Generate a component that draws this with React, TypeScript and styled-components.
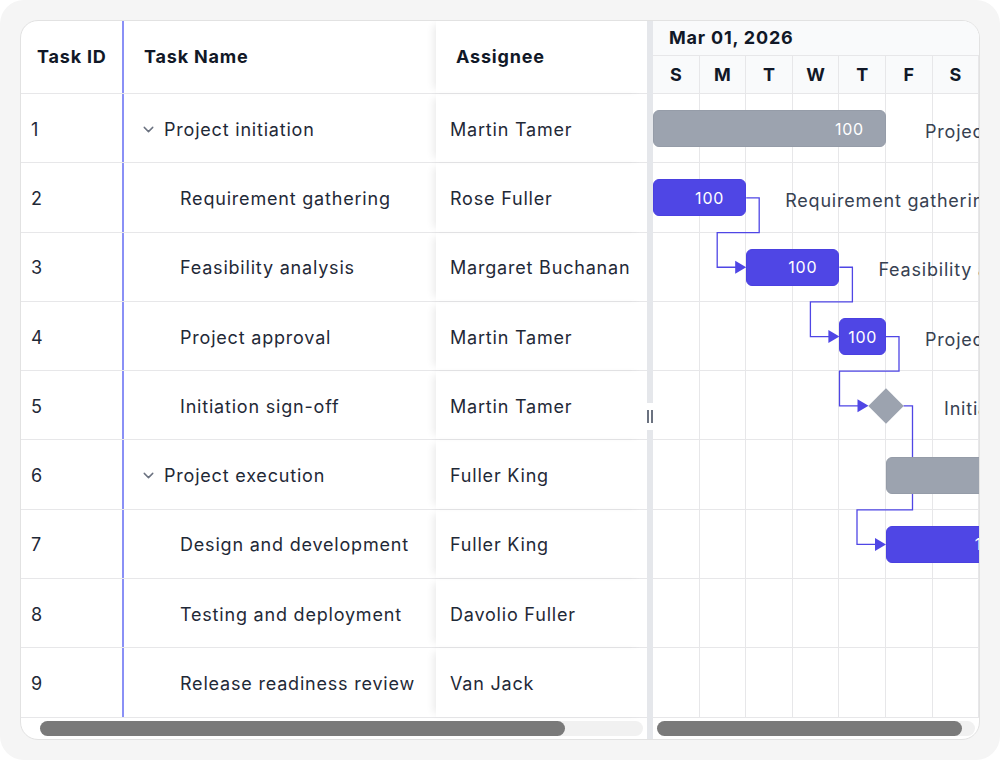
import styled, { createGlobalStyle } from 'styled-components'
import { ChevronDown } from 'lucide-react'

const DAY = 46.6
const ROW = 69.3
const BAR_H = 37

const GlobalStyle = createGlobalStyle`
  html, body {
    margin: 0;
    padding: 0;
    background: #ffffff;
  }
  body {
    font-family: Inter, "Noto Sans", "Liberation Sans", sans-serif;
    letter-spacing: 0.05em;
    color: #1f2937;
  }
`

const Frame = styled.div`
  width: 1000px;
  height: 760px;
  box-sizing: border-box;
  padding: 20px;
  background: #f5f5f5;
  border-radius: 24px;
`

const Card = styled.div`
  width: 960px;
  height: 720px;
  box-sizing: border-box;
  display: flex;
  background: #ffffff;
  border: 1px solid #e2e2e2;
  border-radius: 18px;
  overflow: hidden;
`

const GridPane = styled.div`
  width: 626px;
  display: flex;
  flex-direction: column;
  overflow: hidden;
`

const GridRow = styled.div<{ $header?: boolean }>`
  display: grid;
  grid-template-columns: 103px 312px 1fr;
  height: ${(p) => (p.$header ? '73px' : `${ROW}px`)};
  box-sizing: border-box;
  border-bottom: 1px solid #e7e7e9;
  font-size: 18px;
  font-weight: ${(p) => (p.$header ? 700 : 400)};
  color: ${(p) => (p.$header ? '#111827' : '#1f2937')};
`

// header labels sit a touch high, body labels a touch low
const cellShift = (header?: boolean) =>
  header ? 'padding-bottom: 2px;' : 'padding-top: 2px;'

const IdCell = styled.div<{ $header?: boolean }>`
  display: flex;
  align-items: center;
  padding-left: ${(p) => (p.$header ? '16px' : '10px')};
  ${(p) => cellShift(p.$header)}
  border-right: 2px solid #8a90f6;
`

const NameCell = styled.div<{ $indent: number; $header?: boolean }>`
  display: flex;
  align-items: center;
  gap: 7px;
  padding-left: ${(p) => p.$indent}px;
  ${(p) => cellShift(p.$header)}
  white-space: nowrap;
`

const Chevron = styled(ChevronDown)`
  color: #6b7280;
  flex-shrink: 0;
`

const AssigneeCell = styled.div<{ $header?: boolean }>`
  display: flex;
  align-items: center;
  padding-left: ${(p) => (p.$header ? '20px' : '14px')};
  ${(p) => cellShift(p.$header)}
  white-space: nowrap;
  overflow: hidden;
  position: relative;
  box-shadow: -6px 0 8px -4px rgba(0, 0, 0, 0.09);
`

const ScrollArea = styled.div<{ $left: number; $right: number }>`
  flex: 1;
  box-sizing: border-box;
  padding: 3px ${(p) => p.$right}px 0 ${(p) => p.$left}px;
`

const ScrollTrack = styled.div`
  height: 15px;
  border-radius: 8px;
  background: #f1f1f1;
`

const ScrollThumb = styled.div`
  height: 100%;
  border-radius: 8px;
  background: #7a7a7a;
`

const Splitter = styled.div`
  width: 6px;
  flex-shrink: 0;
  background: #e5e7eb;
  position: relative;
`

const Grip = styled.div`
  position: absolute;
  left: 0;
  top: 382px;
  width: 6px;
  height: 27px;
  background: #ffffff;
  display: flex;
  justify-content: space-between;
  align-items: center;

  &::before,
  &::after {
    content: '';
    width: 2px;
    height: 13px;
    background: #6b7280;
  }
`

const ChartPane = styled.div`
  flex: 1;
  display: flex;
  flex-direction: column;
  overflow: hidden;
`

const ChartHeader = styled.div`
  height: 73px;
  box-sizing: border-box;
  background: #f9fafb;
  border-bottom: 1px solid #e7e7e9;
  display: flex;
  flex-direction: column;
`

const MonthRow = styled.div`
  height: 35px;
  box-sizing: border-box;
  display: flex;
  align-items: center;
  padding-left: 16px;
  padding-bottom: 2px;
  border-bottom: 1px solid #e7e7e9;
  font-size: 18px;
  font-weight: 700;
  color: #111827;
  white-space: nowrap;
`

const DayRow = styled.div`
  flex: 1;
  display: flex;
`

const DayCell = styled.div`
  width: ${DAY}px;
  flex-shrink: 0;
  box-sizing: border-box;
  border-right: 1px solid #e7e7e9;
  display: flex;
  align-items: center;
  justify-content: center;
  font-size: 18px;
  font-weight: 700;
  color: #111827;
  letter-spacing: 0;
`

const ChartBody = styled.div`
  position: relative;
  height: ${ROW * 9}px;
`

const ChartLine = styled.div`
  height: ${ROW}px;
  box-sizing: border-box;
  display: flex;
  border-bottom: 1px solid #e7e7e9;
`

const Bar = styled.div<{ $summary?: boolean; $compact?: boolean }>`
  position: absolute;
  height: ${BAR_H}px;
  box-sizing: border-box;
  border-radius: 6px;
  background: ${(p) => (p.$summary ? '#9ca3af' : '#4f46e5')};
  border: 1px solid ${(p) => (p.$summary ? '#959ca8' : '#4a40e0')};
  display: flex;
  align-items: center;
  justify-content: ${(p) => (p.$compact ? 'center' : 'flex-end')};
  padding-right: ${(p) => (p.$compact ? '0' : '21px')};
  color: #ffffff;
  font-size: 16px;
  white-space: nowrap;
`

const Milestone = styled.div`
  position: absolute;
  width: 25px;
  height: 25px;
  background: #9ca3af;
  transform: translate(-50%, -50%) rotate(45deg);
`

const Caption = styled.div`
  position: absolute;
  transform: translateY(calc(-50% + 2px));
  font-size: 18px;
  color: #374151;
  white-space: nowrap;
`

const Links = styled.svg`
  position: absolute;
  left: 0;
  top: 0;
  overflow: visible;
  pointer-events: none;
`

type Task = { id: number; name: string; assignee: string; parent?: boolean }

const tasks: Task[] = [
  { id: 1, name: 'Project initiation', assignee: 'Martin Tamer', parent: true },
  { id: 2, name: 'Requirement gathering', assignee: 'Rose Fuller' },
  { id: 3, name: 'Feasibility analysis', assignee: 'Margaret Buchanan' },
  { id: 4, name: 'Project approval', assignee: 'Martin Tamer' },
  { id: 5, name: 'Initiation sign-off', assignee: 'Martin Tamer' },
  { id: 6, name: 'Project execution', assignee: 'Fuller King', parent: true },
  { id: 7, name: 'Design and development', assignee: 'Fuller King' },
  { id: 8, name: 'Testing and deployment', assignee: 'Davolio Fuller' },
  { id: 9, name: 'Release readiness review', assignee: 'Van Jack' },
]

type ChartBar = {
  row: number
  start: number
  days: number
  summary?: boolean
  compact?: boolean
  caption?: string
}

const bars: ChartBar[] = [
  { row: 0, start: 0, days: 5, summary: true, caption: 'Project initiation' },
  { row: 1, start: 0, days: 2, caption: 'Requirement gathering' },
  { row: 2, start: 2, days: 2, caption: 'Feasibility analysis' },
  { row: 3, start: 4, days: 1, compact: true, caption: 'Project approval' },
  { row: 5, start: 5, days: 5, summary: true },
  { row: 6, start: 5, days: 3 },
]

const milestone = { row: 4, at: 5, caption: 'Initiation sign-off' }

const days = ['S', 'M', 'T', 'W', 'T', 'F', 'S']

const rowMid = (row: number) => row * ROW + ROW / 2

// elbow link: out of the predecessor, down to the row line, back and into the successor
const linkPath = (x1: number, row1: number, x2: number, row2: number, out = 13) => {
  const y1 = rowMid(row1)
  const y2 = rowMid(row2)
  const turn = row2 * ROW
  return `M ${x1} ${y1} H ${x1 + out} V ${turn} H ${x2 - 29} V ${y2} H ${x2 - 10}`
}

const arrow = (x2: number, row2: number) => {
  const y = rowMid(row2)
  return `${x2 - 11},${y - 6.5} ${x2},${y} ${x2 - 11},${y + 6.5}`
}

const links = [
  { x1: 2 * DAY, r1: 1, x2: 2 * DAY, r2: 2, out: 13 },
  { x1: 4 * DAY, r1: 2, x2: 4 * DAY, r2: 3, out: 13 },
  { x1: 5 * DAY, r1: 3, x2: 5 * DAY - 17.5, r2: 4, out: 13 },
  { x1: 5 * DAY + 17.5, r1: 4, x2: 5 * DAY, r2: 6, out: 9 },
]

const App = () => {
  return (
    <>
      <GlobalStyle />
      <Frame>
        <Card>
          <GridPane>
            <GridRow $header>
              <IdCell $header>Task ID</IdCell>
              <NameCell $indent={20} $header>
                Task Name
              </NameCell>
              <AssigneeCell $header>Assignee</AssigneeCell>
            </GridRow>
            {tasks.map((t) => (
              <GridRow key={t.id}>
                <IdCell>{t.id}</IdCell>
                <NameCell $indent={t.parent ? 16 : 56}>
                  {t.parent && <Chevron size={17} strokeWidth={2} />}
                  {t.name}
                </NameCell>
                <AssigneeCell>{t.assignee}</AssigneeCell>
              </GridRow>
            ))}
            <ScrollArea $left={19} $right={4}>
              <ScrollTrack>
                <ScrollThumb style={{ width: '87%' }} />
              </ScrollTrack>
            </ScrollArea>
          </GridPane>

          <Splitter>
            <Grip />
          </Splitter>

          <ChartPane>
            <ChartHeader>
              <MonthRow>Mar 01, 2026</MonthRow>
              <DayRow>
                {days.map((d, i) => (
                  <DayCell key={i}>{d}</DayCell>
                ))}
              </DayRow>
            </ChartHeader>
            <ChartBody>
              {tasks.map((t) => (
                <ChartLine key={t.id}>
                  {days.map((_, i) => (
                    <DayCell key={i} />
                  ))}
                </ChartLine>
              ))}

              <Links width={1} height={1}>
                {links.map((l, i) => (
                  <g key={i}>
                    <path
                      d={linkPath(l.x1, l.r1, l.x2, l.r2, l.out)}
                      fill="none"
                      stroke="#4f46e5"
                      strokeWidth={1.3}
                    />
                    <polygon points={arrow(l.x2, l.r2)} fill="#4f46e5" />
                  </g>
                ))}
              </Links>

              {bars.map((b, i) => (
                <div key={i}>
                  <Bar
                    $summary={b.summary}
                    $compact={b.compact}
                    style={{
                      left: b.start * DAY,
                      width: b.days * DAY,
                      top: rowMid(b.row) - BAR_H / 2,
                    }}
                  >
                    100
                  </Bar>
                  {b.caption && (
                    <Caption
                      style={{ left: (b.start + b.days) * DAY + 39, top: rowMid(b.row) }}
                    >
                      {b.caption}
                    </Caption>
                  )}
                </div>
              ))}

              <Milestone style={{ left: milestone.at * DAY, top: rowMid(milestone.row) }} />
              <Caption style={{ left: milestone.at * DAY + 58, top: rowMid(milestone.row) }}>
                {milestone.caption}
              </Caption>
            </ChartBody>
            <ScrollArea $left={4} $right={4}>
              <ScrollTrack>
                <ScrollThumb style={{ width: '96%' }} />
              </ScrollTrack>
            </ScrollArea>
          </ChartPane>
        </Card>
      </Frame>
    </>
  )
}

export default App
